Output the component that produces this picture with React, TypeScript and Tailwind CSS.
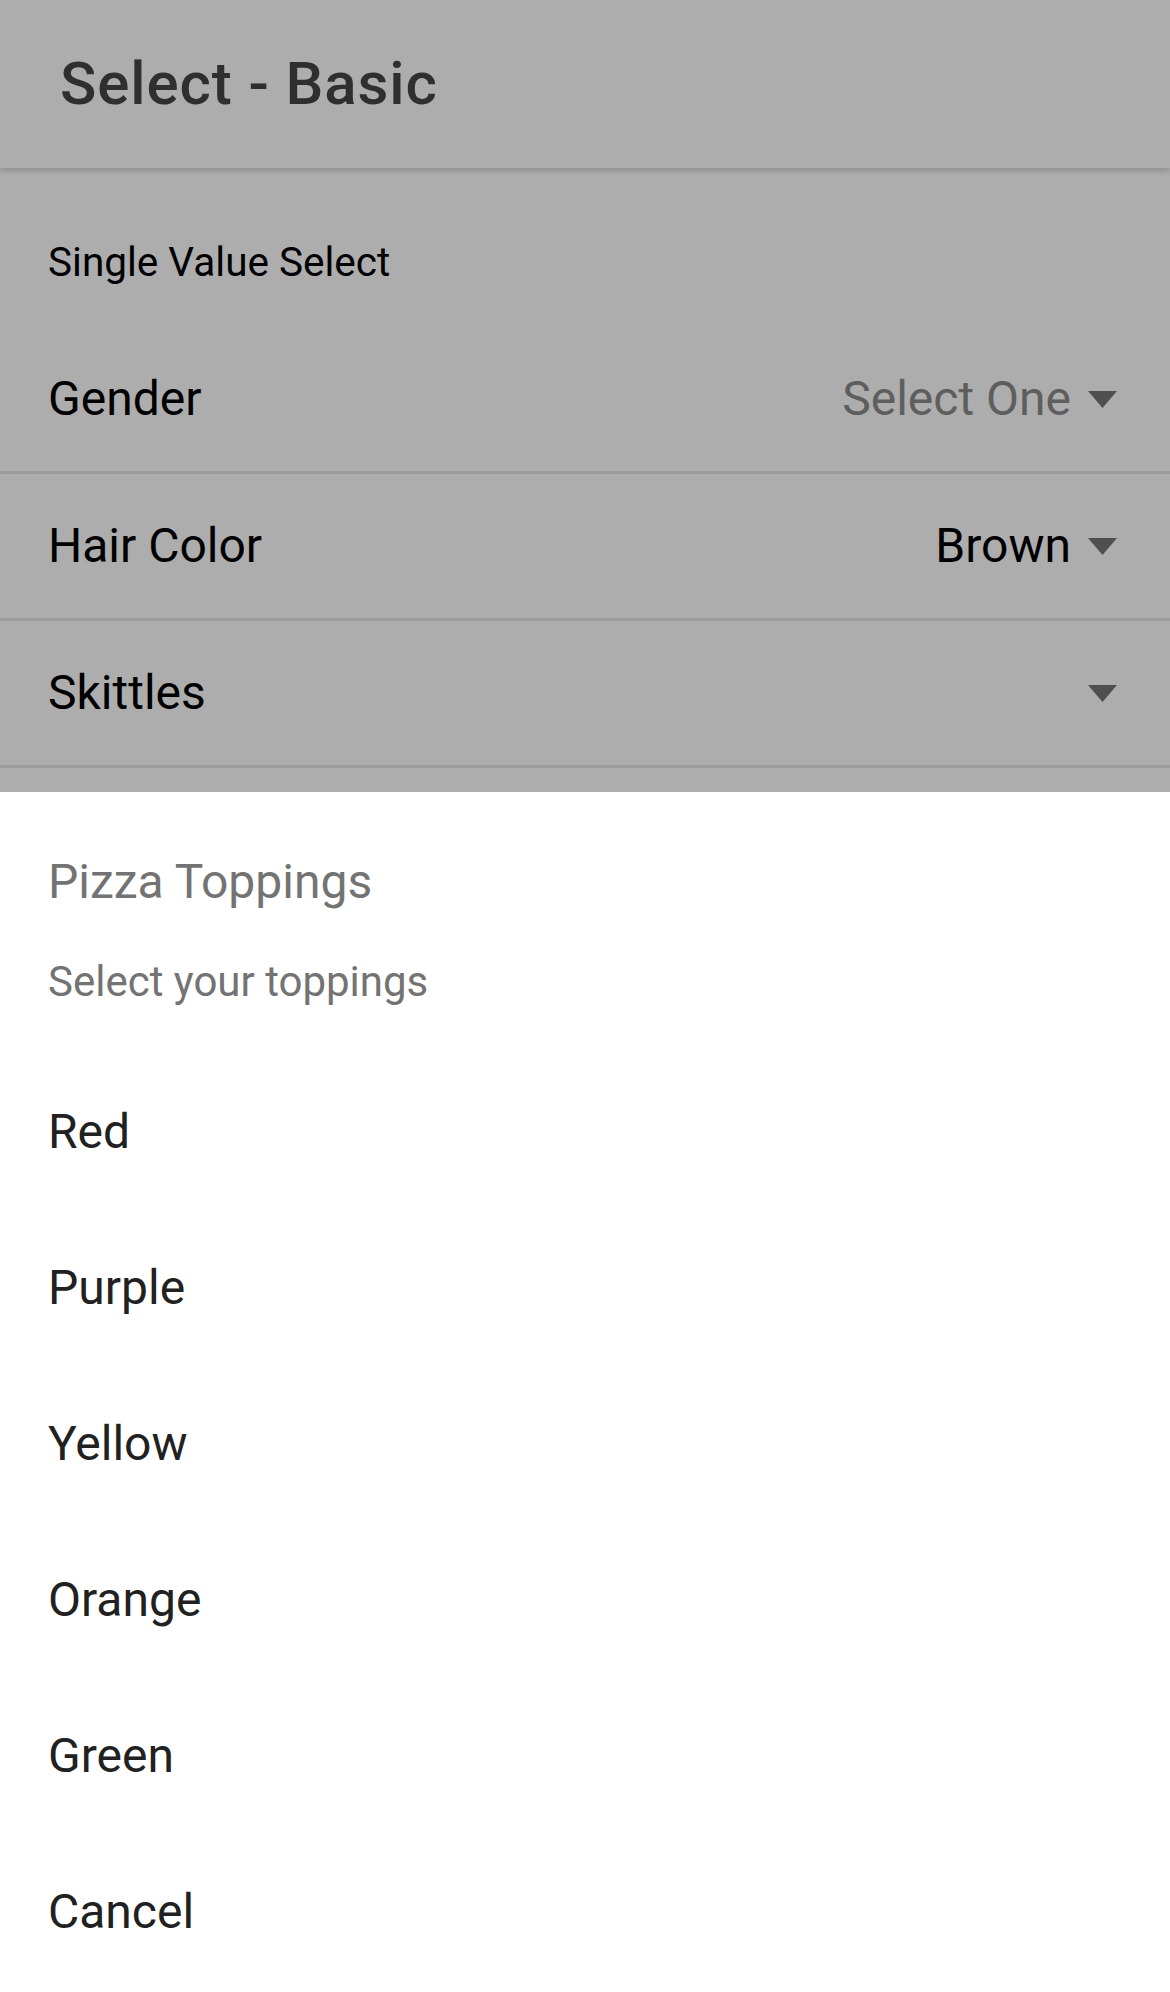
const rows = [
  { label: "Gender", value: "Select One", placeholder: true },
  { label: "Hair Color", value: "Brown", placeholder: false },
  { label: "Skittles", value: "", placeholder: false },
  { label: "", value: "", placeholder: false },
];

const toppings = ["Red", "Purple", "Yellow", "Orange", "Green", "Cancel"];

const Caret = () => (
  <svg width="29" height="17" viewBox="0 0 29 17" className="shrink-0">
    <path d="M0 0 L29 0 L14.5 17 Z" fill="#4f4f4f" />
  </svg>
);

const App = () => {
  return (
    <div className="relative w-[1170px] h-[1992px] overflow-hidden bg-[#adadad] font-['Roboto',sans-serif]">
      {/* toolbar under the scrim */}
      <header className="relative z-10 h-[168px] flex items-center pl-[60px] bg-[#adadad] shadow-[0_3px_6px_rgba(0,0,0,0.18)]">
        <h1 className="text-[60px] leading-[70px] font-medium tracking-[0.015em] text-[#2f2f2f]">
          Select - Basic
        </h1>
      </header>

      {/* list */}
      <div className="h-[159px] pt-[70px] pl-[48px]">
        <p className="text-[40.5px] leading-[48px] text-black">Single Value Select</p>
      </div>

      {rows.map((row, i) => (
        <div
          key={i}
          className="h-[147px] box-border border-b-[3px] border-[#9c9c9c] flex items-center justify-between pl-[48px] pr-[53px]"
        >
          <span className="text-[48px] leading-[56px] text-black">{row.label}</span>
          {i < 3 && (
            <div className="flex items-center gap-[17px]">
              {row.value && (
                <span
                  className={
                    row.placeholder
                      ? "text-[48px] leading-[56px] text-[#5e5e5e]"
                      : "text-[48px] leading-[56px] text-black"
                  }
                >
                  {row.value}
                </span>
              )}
              <Caret />
            </div>
          )}
        </div>
      ))}

      {/* action sheet */}
      <div className="absolute left-0 right-0 top-[792px] bottom-0 z-20 bg-white">
        <div className="h-[262px] pl-[48px] pt-[62px]">
          <p className="text-[48px] leading-[56px] text-[#737373]">Pizza Toppings</p>
          <p className="mt-[48px] text-[42px] leading-[48px] text-[#737373]">
            Select your toppings
          </p>
        </div>
        {toppings.map((t) => (
          <div key={t} className="h-[156px] flex items-center pl-[48px]">
            <span className="text-[48px] leading-[56px] text-[#212121]">{t}</span>
          </div>
        ))}
      </div>
    </div>
  );
};

export default App;
